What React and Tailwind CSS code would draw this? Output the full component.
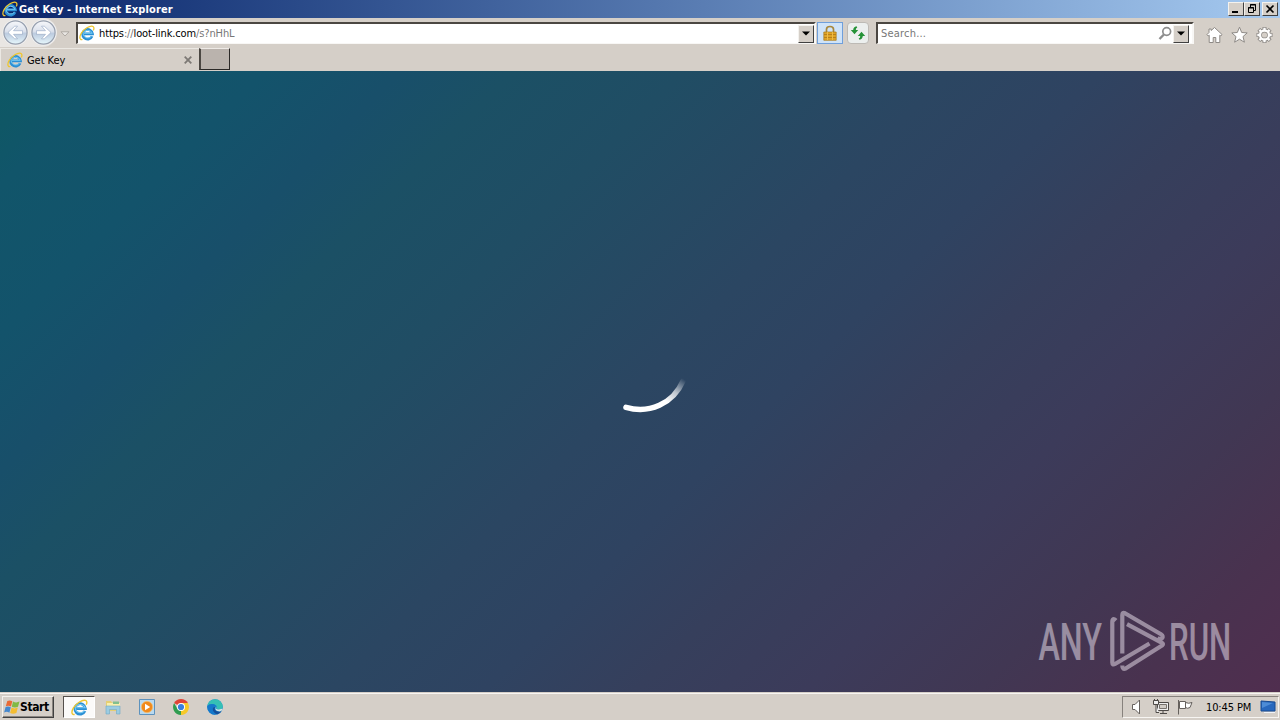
const raised = "border border-t-[#f4f2ee] border-l-[#f4f2ee] border-r-[#404040] border-b-[#404040] bg-[#d5cfc8]";

function IeIcon({ size = 16 }) {
  return (
    <svg width={size} height={size} viewBox="0 0 16 16" fill="none" className="shrink-0">
      <path d="M13.1 11.3A4.9 4.9 0 1 1 13.5 8.9H5" stroke="#2b8fd4" strokeWidth="2.7" />
      <path d="M12.6 11.2A4.9 4.9 0 0 1 4 8.9A4.9 4.9 0 0 1 13.3 8.3H5" stroke="#74c9f3" strokeWidth="1" />
      <path d="M3.4 14.4C.3 15.4 .2 11.6 2.4 8.2C5.2 3.8 10.6 .5 13.6 1.3C15.2 1.8 15.2 3.6 14.3 5.4" stroke="#eec62f" strokeWidth="1.3" />
    </svg>
  );
}

function NavButton({ flip }) {
  return (
    <svg width="27" height="27" viewBox="0 0 27 27" className="shrink-0">
      <defs>
        <linearGradient id={flip ? "navf" : "navb"} x1="0" y1="0" x2="0" y2="1">
          <stop offset="0" stopColor="#f6f7fa" />
          <stop offset=".45" stopColor="#dbe1ec" />
          <stop offset=".55" stopColor="#bccbdf" />
          <stop offset="1" stopColor="#e6f7fc" />
        </linearGradient>
      </defs>
      <circle cx="13.5" cy="13.5" r="13" fill="#f3f2f2" />
      <circle cx="13.5" cy="13.5" r="11.6" fill={flip ? "url(#navf)" : "url(#navb)"} stroke="#969fae" strokeWidth="1.2" />
      <path
        d="M6 13.5L12.7 7.2H15.5L11.5 11.7H20.5V15.3H11.5L15.5 19.8H12.7Z"
        transform={flip ? "translate(27 0) scale(-1 1)" : undefined}
        fill="#fff"
        stroke="#93a6c2"
        strokeWidth=".6"
      />
    </svg>
  );
}

function DropButton() {
  return (
    <div className={`${raised} flex h-[18px] w-4 shrink-0 items-center justify-center`}>
      <svg width="8" height="5" viewBox="0 0 8 5"><path d="M0 .5H8L4 4.5Z" fill="#000" /></svg>
    </div>
  );
}

function TitleBar() {
  return (
    <div className="flex h-[18px] items-center bg-linear-to-r from-[#0a246a] to-[#a6caf0] pl-0.5 pr-0.5">
      <IeIcon size={16} />
      <span className="ml-px whitespace-nowrap pt-px text-[11px] font-bold leading-[18px] tracking-[0.12px] text-white">
        Get Key - Internet Explorer
      </span>
      <div className="ml-auto flex">
        <div className={`${raised} flex h-[14px] w-4 items-center justify-center`}>
          <svg width="12" height="10"><path d="M2 8H8" stroke="#000" strokeWidth="2" /></svg>
        </div>
        <div className={`${raised} flex h-[14px] w-4 items-center justify-center`}>
          <svg width="12" height="10" fill="none" stroke="#000">
            <path d="M4.5 3V.5H9.5V6.5H7.5M4 1H10M2.5 3.5H7.5V8.5H2.5ZM2 4H8" />
          </svg>
        </div>
        <div className={`${raised} ml-0.5 flex h-[14px] w-4 items-center justify-center`}>
          <svg width="12" height="10"><path d="M2.5 1.5L9.5 8.5M9.5 1.5L2.5 8.5" stroke="#000" strokeWidth="1.7" /></svg>
        </div>
      </div>
    </div>
  );
}

function AddressBar() {
  return (
    <div className="flex h-[30px] items-start">
      <div className="flex h-[29px] w-[57px] items-center rounded-r-full bg-[#e9e6e3] pl-0.5">
        <NavButton />
        <div className="ml-px flex"><NavButton flip /></div>
      </div>
      <svg width="10" height="6" viewBox="0 0 10 6" className="ml-[3px] mt-[13px]">
        <path d="M1 .8H9L5 5Z" fill="#e9e7e3" stroke="#aaa59f" strokeWidth=".9" />
      </svg>

      <div className="ml-1.5 mt-1 flex h-[22px] w-[740px] items-center border-2 border-b border-b-[#f8f7f5] border-l-[#4b4742] border-r-[#f8f7f5] border-t-[#4b4742] bg-white pl-px">
        <div className="pb-0.5"><IeIcon size={16} /></div>
        <span className="ml-1 whitespace-nowrap pt-0.5 text-[11px] tracking-[-0.12px] text-[#777]">
          <span className="text-black">https</span>
          <span>://</span>
          <span className="text-black">loot-link.com</span>
          <span>/s?nHhL</span>
        </span>
        <div className="ml-auto"><DropButton /></div>
      </div>

      <div className="ml-px mt-1 flex h-[22px] w-[26px] items-center justify-center border border-[#6f9fdb] bg-[#cfe3f8]">
        <svg width="14" height="16" viewBox="0 0 14 16">
          <path d="M3.5 7V4.3Q3.5 1.5 7 1.5T10.5 4.3V7" fill="none" stroke="#a8873c" strokeWidth="1.7" />
          <path d="M.8 7H13.2V15.3H.8Z" fill="#e0a426" stroke="#a97b1c" strokeWidth=".7" />
          <path d="M1 9.5H13M1 12.5H13" stroke="#b8811b" />
          <path d="M4.5 7V15M9.5 7V15" stroke="#edbb48" />
        </svg>
      </div>
      <div className="ml-1 mt-1 flex h-[22px] w-[22px] items-center justify-center rounded-sm border border-[#bdbab5] bg-[#ecefee]">
        <svg width="16" height="14" viewBox="0 0 16 14" className="shrink-0" fill="#269338">
          <path d="M6.5 .3L7.3 1.5Q5.6 2 5.8 4H8.2L4.5 8.2L.8 4H3.2Q3.4 1 6.500 .3Z" />
          <path d="M9.5 13.700L8.700 12.500Q10.400 12 10.200 10H7.800L11.500 5.800L15.200 10H12.800Q12.600 13 9.500 13.700Z" />
        </svg>
      </div>

      <div className="ml-[7px] mt-1 flex h-[22px] w-[318px] items-center border-2 border-b border-b-[#f8f7f5] border-l-[#4b4742] border-r-[#f8f7f5] border-t-[#4b4742] bg-white pl-[3px] pr-[3px]">
        <span className="pt-0.5 text-[11px] tracking-[0.2px] text-[#777]">Search...</span>
        <svg width="15" height="15" viewBox="0 0 15 15" className="ml-auto" fill="none" stroke="#8d8d8d">
          <circle cx="8.700" cy="5.500" r="3.900" strokeWidth="1.700" />
          <path d="M5.900 8.500L1.500 13" strokeWidth="2.400" />
        </svg>
        <div><DropButton /></div>
      </div>

      <div className="ml-3 mt-2 flex gap-2">
        <svg width="17" height="18" viewBox="0 0 17 18" fill="#fff" stroke="#8e8a86">
          <path d="M8.5 1.5L16 8.5L14.8 10L13.8 9.2V16.5H9.8V11.5H7.2V16.5H3.2V9.2L2.2 10L1 8.5L3 6.5V3H5.2V4.5Z" />
        </svg>
        <svg width="17" height="18" viewBox="0 0 17 18" fill="#fff" stroke="#8e8a86">
          <path d="M8.5 1.2L10.7 6.5L16.2 6.9L12 10.6L13.4 16.2L8.5 13.2L3.6 16.2L5 10.6L.8 6.9L6.3 6.5Z" />
        </svg>
        <svg width="17" height="18" viewBox="0 0 17 18" fill="none">
          <g stroke="#8e8a86" strokeWidth="4">
            <path d="M8.5 1V4M8.5 14V17M.5 9H3.5M13.5 9H16.5M2.8 3.3L5 5.5M12 12.5L14.2 14.7M14.2 3.3L12 5.5M5 12.5L2.8 14.7" />
            <circle cx="8.5" cy="9" r="4.6" />
          </g>
          <g stroke="#fff" strokeWidth="2.3">
            <path d="M8.5 1.8V4M8.5 14V16.2M1.3 9H3.5M13.5 9H15.7M3.4 3.9L5 5.5M12 12.5L13.6 14.1M13.6 3.9L12 5.5M5 12.5L3.4 14.1" />
            <circle cx="8.5" cy="9" r="4.5" />
          </g>
        </svg>
      </div>
    </div>
  );
}

function TabRow() {
  return (
    <div className="flex h-[23px] items-start">
      <div className="flex h-[23px] w-[199px] items-center border-l border-t border-[#ebe8e3] pl-1.5">
        <IeIcon size={16} />
        <span className="ml-1 pt-0.5 text-[11px] tracking-[-0.05px] text-black">Get Key</span>
        <svg width="8" height="8" className="ml-auto mr-[7px]">
          <path d="M.7 .7L7.3 7.3M7.3 .7L.7 7.3" stroke="#7d7975" strokeWidth="1.8" />
        </svg>
      </div>
      <div className="h-[22px] w-[31px] border border-l-2 border-b-[#2b2927] border-l-[#4b4742] border-r-[#2b2927] border-t-[#eeeae6] bg-[#bab3ad]" />
    </div>
  );
}

function Spinner() {
  return (
    <svg width="68" height="40" viewBox="0 0 68 40" fill="none">
      <defs>
        <linearGradient id="arc" gradientUnits="userSpaceOnUse" x1="48" y1="28" x2="65" y2="5">
          <stop offset="0" stopColor="#fff" />
          <stop offset=".45" stopColor="#fff" stopOpacity=".7" />
          <stop offset="1" stopColor="#fff" stopOpacity="0" />
        </linearGradient>
      </defs>
      <path d="M6 32.3C29 39 53 29 63 6" stroke="url(#arc)" strokeWidth="5.5" strokeLinecap="round" />
    </svg>
  );
}

function Watermark() {
  return (
    <svg width="204" height="64" viewBox="0 0 204 64" className="opacity-50">
      <g fill="#eee5f0" fontFamily="Roboto, sans-serif" fontSize="52" fontWeight="500">
        <text transform="translate(1.5 50.5) scale(.62 1)">ANY</text>
        <text transform="translate(132 50.5) scale(.6 1)">RUN</text>
      </g>
      <path
        d="M79 11.500Q75.300 8 75.300 13V53.500Q75.300 56.500 78 55L112.500 34.500M85.300 44.500V6Q85.300 2.800 88 4.200L124 25.200Q126.800 27 125 29.300Q123.500 30.800 120.500 29M90 15.200L125 33.800Q127 35 125 36.500L89 59.300Q85.300 61.200 85.300 56.500"
        fill="none"
        stroke="#eee5f0"
        strokeWidth="4.200"
        strokeLinejoin="round"
      />
    </svg>
  );
}

function WindowsFlag() {
  return (
    <svg width="16" height="16" viewBox="0 0 16 16">
      <path d="M3.300 2Q6 .7 8.300 2.300L7 7.500Q4.500 6 1.800 7.200Z" fill="#e96a35" />
      <path d="M9 2.500Q12 4.200 15.500 2.600L14 7.800Q11 9.200 7.800 7.800Z" fill="#81b944" />
      <path d="M1.600 8Q4.300 6.900 6.800 8.300L5.400 13.700Q3 12.200.1 13.400Z" fill="#4588ce" />
      <path d="M7.600 8.600Q10.500 10.200 13.800 8.600L12.400 14Q9 15.500 6.100 14Z" fill="#f4bd32" />
    </svg>
  );
}

function Taskbar() {
  return (
    <div className="flex h-7 items-start border-t border-[#d5cfc8] bg-[#d5cfc8] shadow-[inset_0_1px_0_#f7f5f2]">
      <div className={`${raised} ml-0.5 mt-[3px] flex h-[22px] w-[52px] items-center pl-px shadow-[inset_-1px_-1px_0_#8a8580]`}>
        <WindowsFlag />
        <span className="whitespace-nowrap text-[12px] font-bold tracking-[-0.4px] text-black">Start</span>
      </div>
      <div className="ml-[9px] mt-[3px] flex h-[22px] w-8 items-center justify-center border border-b-white border-l-[#55504c] border-r-white border-t-[#55504c] bg-[#fbfaf9]">
        <IeIcon size={17} />
      </div>

      <div className="ml-2.5 mt-1.5 flex gap-[18px]">
        {/* explorer */}
        <svg width="16" height="16" viewBox="0 0 16 16">
          <path d="M1 2H6L7 3.500H14.500V12H1Z" fill="#e6cf72" />
          <path d="M2 4H15V7H2Z" fill="#f8efae" />
          <path d="M8 2.500H14V5H8Z" fill="#82bf8e" />
          <path d="M1 7H15V15H11.500V10.500H4.500V15H1Z" fill="#9ccce2" stroke="#6faac7" strokeWidth=".6" />
        </svg>
        {/* media player */}
        <svg width="16" height="16" viewBox="0 0 16 16">
          <path d="M.5 .5H15.500V15.500H.5Z" fill="#b9d9ef" stroke="#5d92bd" />
          <circle cx="8" cy="8" r="5.700" fill="#f08a1c" stroke="#f8c271" strokeWidth=".7" />
          <path d="M6 4.800L11.200 8L6 11.200Z" fill="#fff" />
        </svg>
        {/* chrome */}
        <svg width="16" height="16" viewBox="0 0 16 16">
          <path d="M8 8L1.100 4A8 8 0 0 1 14.900 4Z" fill="#df4437" />
          <path d="M8 8V4H14.900A8 8 0 0 1 8 16Z" fill="#f6c928" />
          <path d="M8 8L8 16A8 8 0 0 1 1.100 4L4.500 10Z" fill="#309c50" />
          <circle cx="8" cy="8" r="4" fill="#fff" />
          <circle cx="8" cy="8" r="3.100" fill="#387fe0" />
        </svg>
        {/* edge */}
        <svg width="16" height="16" viewBox="0 0 16 16">
          <circle cx="8" cy="8" r="7.800" fill="#1686ce" />
          <path d="M.3 7A7.800 7.800 0 0 1 15.800 7.500C15.800 10.500 11.500 11.500 9.500 9.500C11 7.500 8.500 5 5.500 5Q2 5 .3 7Z" fill="#35c0b5" />
          <path d="M.3 7Q2 4.800 5.500 5Q8.500 5.200 9 7.500Q6 6.500 5.500 10Q5.500 13.500 9 15.700A7.800 7.800 0 0 1 .3 7Z" fill="#1578cb" />
          <path d="M9 7.500C7 8 7 12 11 12.500Q13.500 12.700 15 11.300Q13.500 14.500 10 15.600C5 13 4 8 9 7.500Z" fill="#154f9b" />
          <path d="M9 7.500Q9.500 8.500 9 9.500Q10.500 11.500 14.800 9.800L15.700 11L13 12.400Q7 12.500 9 7.500Z" fill="#d5e5e5" />
        </svg>
      </div>

      <div className="ml-auto mr-px mt-[3px] flex h-[22px] w-[157px] items-center border border-b-[#f7f5f2] border-l-[#87827d] border-r-[#f7f5f2] border-t-[#87827d] pl-[9px]">
        <svg width="10" height="16" viewBox="0 0 10 16" fill="#fff" stroke="#66615d">
          <path d="M.5 5.500H3L7.500 1V15L3 10.500H.5Z" />
        </svg>
        <svg width="16" height="16" viewBox="0 0 16 16" className="ml-[11px]" fill="#eee" stroke="#4d4946">
          <path d="M4.500 3.500H15.500V11.500H4.500Z" />
          <path d="M6.500 5.500H13.500V9.500H6.500Z" fill="#d0cbc5" stroke="#77726d" />
          <path d="M.5 1.500H5.500V5.500H.5ZM1.500 0V2M4.500 0V2M3 5.500V13.500H6M7 14.500H14M10 12V14" />
        </svg>
        <svg width="16" height="16" viewBox="0 0 16 16" className="ml-2" fill="#fff" stroke="#65605c">
          <path d="M2.500 2.500H8.500V9.500H2.500ZM8.500 3.500Q11.500 5 15 3.500L13 8.500Q10.500 10 8.500 8.500M1.500 1V15.500" />
        </svg>
        <span className="ml-[13px] whitespace-nowrap pt-0.5 text-[11px] tracking-[-0.12px] text-black">10:45 PM</span>
        <svg width="16" height="14" viewBox="0 0 16 14" className="ml-auto mr-[2px]">
          <path d="M1 1L15 2V11H1Z" fill="#2868bd" stroke="#174a91" />
          <path d="M2 2L13 3L2 8Z" fill="#4d8cd6" />
          <path d="M4 12.500H15" stroke="#f1f3f7" />
        </svg>
      </div>
    </div>
  );
}

function App() {
  return (
    <div className="flex h-[720px] w-[1280px] flex-col overflow-hidden bg-[#d5cfc8] font-['DejaVu_Sans_Condensed','DejaVu_Sans',sans-serif]">
      <TitleBar />
      <AddressBar />
      <TabRow />

      {/* PAGE */}
      <div className="relative flex h-[621px] justify-center bg-[linear-gradient(135deg,#0e5864_0%,#0f5766_3%,#11556a_6%,#13536b_14%,#184f6a_21%,#1b5065_27%,#204d64_36%,#2b4662_50%,#2f4361_58%,#363f5c_66%,#3c3b5a_75%,#413753_84%,#49324f_92%,#502e4f_100%)]">
        <div className="ml-7 mt-[304px]">
          <Spinner />
        </div>
        <div className="absolute bottom-[19px] right-[39px]">
          <Watermark />
        </div>
      </div>

      <Taskbar />
    </div>
  );
}

export default App;
